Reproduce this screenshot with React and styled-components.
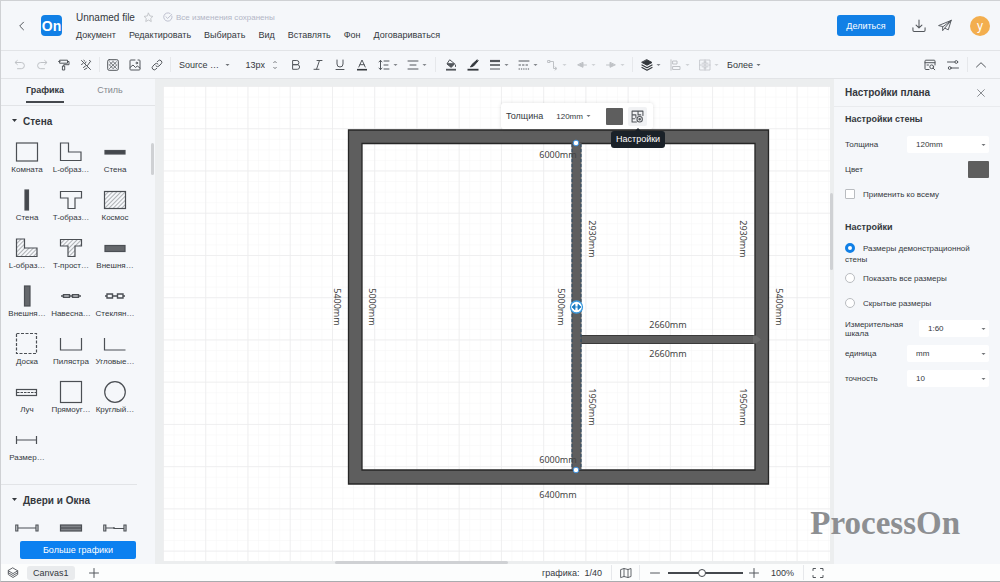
import React, { useState } from 'react';
import styled, { createGlobalStyle } from 'styled-components';

const GlobalStyle = createGlobalStyle`
  * {
    box-sizing: border-box;
  }

  body {
    margin: 0;
    font-family: 'Liberation Sans', Arial, sans-serif;
    font-size: 9px;
    color: #34383d;
    background: #f5f7fa;
  }

  button, input, select {
    font-family: inherit;
    color: inherit;
    margin: 0;
  }

  button {
    cursor: pointer;
  }
`;

const Page = styled.div`
  position: relative;
  height: 100vh;
  display: flex;
  flex-direction: column;
  overflow: hidden;
  border: 1px solid #cfd1d4;
  border-right: none;
  border-bottom-color: #a9abae;
`;

// Header
const Header = styled.header`
  display: flex;
  align-items: center;
  height: 50px;
  flex-shrink: 0;
  padding: 0 10px 0 12px;
  border-bottom: 1px solid #e2e4e7;
`;

const IconButton = styled.button`
  display: flex;
  align-items: center;
  justify-content: center;
  gap: 3px;
  width: ${props => props.$width || 22}px;
  height: ${props => props.$height || 22}px;
  flex-shrink: 0;
  padding: 0;
  border: none;
  background: none;
  color: ${props => (props.$muted ? '#bfc2c6' : '#53575c')};
`;

const Logo = styled.a`
  display: flex;
  align-items: center;
  justify-content: center;
  width: 21px;
  height: 21px;
  margin: 0 14px 0 11px;
  border-radius: 4px;
  background: #1180e6;
  color: white;
  font-size: 14px;
  font-weight: bold;
  text-decoration: none;
`;

const HeaderMain = styled.div`
  flex: 1;
  display: flex;
  flex-direction: column;
  gap: 5px;
`;

const FileRow = styled.div`
  display: flex;
  align-items: center;
  height: 14px;
`;

const FileName = styled.h1`
  margin: 0 8px 0 0;
  font-size: 10px;
  font-weight: normal;
`;

const Saved = styled.span`
  display: flex;
  align-items: center;
  gap: 3px;
  margin-left: 8px;
  color: #b3b6c6;
  font-size: 8px;
`;

const Menu = styled.nav`
  display: flex;
  gap: 13px;
`;

const MenuLink = styled.a`
  color: #34383d;
  font-size: 9px;
  line-height: 12px;
  text-decoration: none;
`;

const ShareButton = styled.button`
  width: 58px;
  height: 21px;
  margin-right: 11px;
  padding: 0;
  border: none;
  border-radius: 3px;
  background: #1180e6;
  color: white;
  font-size: 9px;
`;

const Avatar = styled.button`
  width: 20px;
  height: 20px;
  margin-left: 12px;
  padding: 0;
  border: none;
  border-radius: 50%;
  background: #f3ae4e;
  color: white;
  font-size: 12px;
  line-height: 18px;
`;

// Toolbar
const Toolbar = styled.div`
  display: flex;
  align-items: center;
  height: 28px;
  flex-shrink: 0;
  padding: 0 8px;
  border-bottom: 1px solid #e2e4e7;
`;

const Separator = styled.span`
  width: 1px;
  height: 15px;
  flex-shrink: 0;
  margin: 0 ${props => props.$gap || 2}px;
  background: #e6e8eb;
`;

const SelectBox = styled.span`
  position: relative;
  display: flex;
  align-items: center;
  width: ${props => props.$width}px;
  height: 17px;
  flex-shrink: 0;
  border-radius: 2px;
  background: ${props => (props.$filled ? 'white' : 'none')};
  font-size: ${props => (props.$small ? 8 : 9)}px;

  svg {
    position: absolute;
    right: ${props => props.$caret || 3}px;
    pointer-events: none;
  }
`;

const Select = styled.select`
  appearance: none;
  width: 100%;
  height: 100%;
  padding: 0 0 0 ${props => props.$pad || 8}px;
  border: none;
  background: none;
  font-size: inherit;
`;

const SizeInput = styled.input`
  width: 30px;
  padding: 0;
  border: none;
  background: none;
  font-size: 9px;
  text-align: right;
`;

const MoreButton = styled.button`
  display: flex;
  align-items: center;
  gap: 3px;
  padding: 0 4px;
  border: none;
  background: none;
  font-size: 9px;
`;

const Spacer = styled.span`
  flex: 1;
`;

// Body
const Workspace = styled.div`
  flex: 1;
  min-height: 0;
  display: flex;
`;

const Library = styled.aside`
  display: flex;
  flex-direction: column;
  width: 154px;
  flex-shrink: 0;
`;

const Tabs = styled.div`
  display: flex;
  height: 27px;
  flex-shrink: 0;
  padding-left: 12px;
  gap: 1px;
  border-bottom: 1px solid #e2e4e7;
`;

const Tab = styled.button`
  width: 64px;
  height: 26px;
  padding: 0 0 2px;
  border: none;
  background: none;
  color: ${props => (props.$active ? '#34383d' : '#85898e')};
  font-size: 9px;
  font-weight: ${props => (props.$active ? 'bold' : 'normal')};

  span {
    display: inline-block;
    height: 24px;
    line-height: 22px;
    border-bottom: 2px solid ${props => (props.$active ? '#44484d' : 'transparent')};
  }
`;

const LibraryBody = styled.div`
  flex: 1;
  min-height: 0;
  display: flex;
  justify-content: space-between;
  overflow: hidden;
`;

const ShapeGroup = styled.section`
  padding: 8px 0 0 4px;

  & + & {
    margin-top: 17px;
    border-top: 1px solid #e2e4e7;
  }
`;

const GroupTitle = styled.h2`
  display: flex;
  align-items: center;
  gap: 5px;
  height: 14px;
  margin: 0;
  padding-left: 6px;
  font-size: 10px;
  font-weight: bold;
`;

const ShapeGrid = styled.div`
  display: grid;
  grid-template-columns: repeat(3, 44px);
  row-gap: 4px;
  padding-top: 7px;
`;

const Shape = styled.button`
  display: flex;
  flex-direction: column;
  align-items: center;
  justify-content: center;
  height: ${props => (props.$short ? 28 : 44)}px;
  padding: 0;
  gap: 1px;
  border: none;
  background: none;
  font-size: 8px;
  line-height: 10px;
  white-space: nowrap;
`;

const Thumb = styled.span`
  width: 3px;
  height: ${props => props.$size || 3}px;
  flex-shrink: 0;
  border-radius: 2px;
  background: #cfd1d4;
`;

const LibraryThumb = styled(Thumb)`
  margin: 37px 1px 0 0;
`;

const MoreShapes = styled.button`
  height: 18px;
  flex-shrink: 0;
  margin: 0 19px 5px;
  padding: 0;
  border: none;
  border-radius: 2px;
  background: #0b80f0;
  color: white;
  font-size: 9px;
`;

const Stage = styled.main`
  flex: 1;
  min-width: 0;
  display: grid;
  grid-template-columns: 1fr 4px;
  grid-template-rows: 1fr 3px;
  padding: 7px 0 0 8px;
  background: #eceeef;
`;

const Sheet = styled.div`
  position: relative;
  overflow: hidden;
  background: white;
`;

const Plan = styled.svg`
  display: block;
  width: 100%;
  height: 100%;

  text {
    font-family: 'Noto Sans', sans-serif;
    font-size: 9px;
    fill: #444;
    text-anchor: middle;
    dominant-baseline: central;
  }
`;

const VerticalTrack = styled.div`
  padding-top: 107px;
  display: flex;
`;

const HorizontalTrack = styled.div`
  padding-left: 172px;
  display: flex;
`;

const HorizontalThumb = styled(Thumb)`
  width: 173px;
`;

const FloatingBar = styled.div`
  position: absolute;
  left: 338px;
  top: 17px;
  display: flex;
  align-items: center;
  height: 26px;
  padding: 0 6px 0 5px;
  border-radius: 3px;
  background: white;
  box-shadow: 0 0 4px rgba(0, 0, 0, 0.12);
  font-size: 9px;
`;

const Swatch = styled.button`
  width: ${props => props.$width || 17}px;
  height: 17px;
  padding: 0;
  border: none;
  border-radius: 1px;
  background: #5e5e5e;
`;

const PlanButton = styled(IconButton)`
  margin-left: 5px;
  border-radius: 2px;
  background: #f1f2f4;
`;

const Tooltip = styled.div`
  position: absolute;
  left: 448px;
  top: 45px;
  padding: 0 5px;
  border-radius: 3px;
  background: #1a2128;
  color: white;
  font-size: 9px;
  line-height: 17px;

  &::before {
    content: '';
    position: absolute;
    left: 50%;
    top: -3px;
    margin-left: -3px;
    border: solid transparent;
    border-width: 0 3px 3px;
    border-bottom-color: #1a2128;
  }
`;

// Settings panel
const Settings = styled.aside`
  width: 166px;
  flex-shrink: 0;
`;

const SettingsHeader = styled.div`
  display: flex;
  align-items: center;
  justify-content: space-between;
  height: 28px;
  padding: 0 8px 0 11px;
  border-bottom: 1px solid #e9ebee;
`;

const SettingsTitle = styled.h2`
  margin: 0;
  font-size: 10px;
`;

const SettingsSection = styled.section`
  padding: 0 11px;
`;

const SettingsHeading = styled.h3`
  margin: 0;
  font-size: 9px;
  line-height: ${props => (props.$spaced ? 17 : 25)}px;
  padding-top: ${props => (props.$spaced ? 12 : 0)}px;
`;

const Row = styled.div`
  display: flex;
  align-items: center;
  justify-content: space-between;
  height: 25px;
  font-size: 8px;
  line-height: 9px;
`;

const Option = styled.label`
  display: block;
  font-size: 8px;
  line-height: 11px;
  padding: 7px 0 ${props => (props.$wraps ? 1 : 7)}px;
`;

const optionBox = `
  appearance: none;
  width: 10px;
  height: 10px;
  margin-right: 8px;
  vertical-align: -2px;
  background: white;
  border: 1px solid #b9bcc0;
`;

const Checkbox = styled.input`
  ${optionBox}
  border-radius: 1px;

  &:checked {
    background: #1180e6;
  }
`;

const Radio = styled.input`
  ${optionBox}
  border-radius: 50%;

  &:checked {
    border: 3px solid #1180e6;
  }
`;

const Watermark = styled.div`
  position: absolute;
  right: 40px;
  bottom: 38px;
  color: #8d8f92;
  font-family: 'Liberation Serif', serif;
  font-size: 33px;
  font-weight: bold;
  line-height: 40px;
  pointer-events: none;
`;

// Status bar
const StatusBar = styled.footer`
  display: flex;
  align-items: center;
  height: 17px;
  flex-shrink: 0;
  padding: 0 171px 0 1px;
  background: #fcfdfd;
`;

const CanvasTab = styled.button`
  height: 14px;
  margin: 0 8px 0 3px;
  padding: 0 6px;
  border: none;
  border-radius: 3px;
  background: #e9ebed;
  font-size: 9px;
`;

const StatusText = styled.span`
  padding: 0 6px;
  font-size: 9px;
`;

const Zoom = styled.input`
  appearance: none;
  width: 75px;
  height: 10px;
  background: none;

  &::-webkit-slider-runnable-track {
    height: 2px;
    background: #44484d;
  }

  &::-webkit-slider-thumb {
    appearance: none;
    width: 8px;
    height: 8px;
    margin-top: -3px;
    border: 1px solid #44484d;
    border-radius: 50%;
    background: white;
  }
`;

const Icon = ({ size = 12, children }) => (
  <svg
    width={size}
    height={size}
    viewBox="0 0 12 12"
    fill="none"
    stroke="currentColor"
    strokeWidth="1"
    strokeLinecap="round"
    strokeLinejoin="round"
    aria-hidden="true"
  >
    {children}
  </svg>
);

const Caret = () => (
  <svg width="5" height="4" viewBox="0 0 5 4" aria-hidden="true">
    <path d="M.5 1h4L2.5 3z" fill="currentColor" opacity=".7" />
  </svg>
);

const GroupArrow = () => (
  <svg width="7" height="7" viewBox="0 0 7 7" aria-hidden="true">
    <path d="M1 1h5L3.500 4z" fill="#34383d" />
  </svg>
);

const icons = {
  undo: <path d="M3.3 1.5 1 3.5l2.3 2M1.3 3.5h6a3 3 0 0 1 0 6.2H3.5" />,
  redo: <path d="m8.7 1.5 2.3 2-2.3 2M10.7 3.5h-6a3 3 0 0 0 0 6.2h3.8" />,
  painter: <path d="M2 1.2h7.5v3H2zM9.5 2.5H11v3.2H5.7V7M4.8 7h1.9v4H4.8zM.6 2.5H2" />,
  clear: <path d="m1.5 1.5 9 9M7.500 6.500 10 3M5 4.500l1-1.500M1.500 5.500l1.500-1M3.500 8.500l2-1.500M4.500 10.500 7 9M9.500 1.500l1.300 1M3.800 1.300l1 .8" />,
  pattern: (
    <>
      <rect x=".7" y=".7" width="10.6" height="10.6" rx="1.5" />
      <path d="m2.500 2.800 7 6.700M6 2.500l3.500 3.300M2.500 6 6 9.500M9.500 2.800l-7 6.700M6 2.500 2.500 5.800M9.500 6.200 6.200 9.500" strokeWidth=".8" />
    </>
  ),
  image: (
    <>
      <path d="M6 1H1.8a.8.8 0 0 0-.8.8v8.4c0 .5.3.8.8.8h8.4c.5 0 .8-.3.8-.8V1.800a.8.8 0 0 0-.8-.8H9M1 8.500 4 6l2.500 2.500L8.300 7 11 9" />
      <circle cx="7.800" cy="4" r=".8" />
    </>
  ),
  link: <path d="M5 7a2.1 2.1 0 0 0 3 0l2.200-2.200a2.100 2.100 0 0 0-3-3L6.300 2.700M7 5a2.100 2.100 0 0 0-3 0L1.800 7.200a2.100 2.100 0 0 0 3 3l.9-.9" />,
  bold: <path d="M3 1.500h3.800a2.100 2.100 0 0 1 0 4.200H3zM3 5.700h4.300a2.300 2.300 0 0 1 0 4.600H3z" />,
  italic: <path d="M5 1.500h5M2 10.300h5M7.500 1.500l-3 8.800" />,
  underline: <path d="M3 1v4a3 3 0 0 0 6 0V1M2 10.500h8" />,
  color: (
    <>
      <path d="M2.800 8 6 1l3.200 7M3.900 5.700h4.200" />
      <path d="M1 10.700h10" stroke="#34383d" strokeWidth="1.600" strokeLinecap="butt" />
    </>
  ),
  leading: <path d="M2.500 1.500v9M1 2.800l1.500-1.300L4 2.800M1 9.200l1.500 1.300L4 9.200M6 2h5M6 6h4M6 10h5" />,
  align: <path d="M1 2h10M3 6h6M1 10h10" />,
  fill: (
    <>
      <path d="m5 1 4.500 3.700-3.200 3.500-4-3.200zM2.500 4.800h6.500" />
      <path d="M2.500 5h6.800L6.300 8z" fill="currentColor" />
      <path d="M10.500 6v1.500" />
      <path d="M1 10.700h10" strokeWidth="1.800" strokeLinecap="butt" />
    </>
  ),
  pen: (
    <>
      <path d="M10 1 5 5.500 3.500 8 6.500 7 11 2z" fill="#34383d" stroke="#34383d" />
      <path d="M.5 10.700h11" stroke="#34383d" strokeWidth="1.800" strokeLinecap="butt" />
    </>
  ),
  weight: (
    <>
      <path d="M1 2h10" strokeWidth="2.200" strokeLinecap="butt" />
      <path d="M1 6h10" strokeWidth="1.600" strokeLinecap="butt" />
      <path d="M1 10h10" strokeLinecap="butt" />
    </>
  ),
  dash: (
    <>
      <path d="M1 2h10" />
      <path d="M1 6h10" strokeDasharray="1.500 2" />
      <path d="M1 10h10" strokeDasharray=".5 1.800" />
    </>
  ),
  connector: <path d="M1 1.500h2v2H1zM3 2.500h3.500v7H9M8 8l2 1.500L8 11" />,
  left: <path d="M10.500 6H7M7 3.700v4.600L2 6z" fill="currentColor" />,
  right: <path d="M1.500 6H5M5 3.700v4.600L10 6z" fill="currentColor" />,
  layers: (
    <>
      <path d="m6 .8 5 2.700-5 2.700-5-2.700z" fill="#34383d" stroke="#34383d" />
      <path d="m1 6 5 2.700L11 6M1 8.500l5 2.700 5-2.700" stroke="#34383d" strokeWidth="1.200" />
    </>
  ),
  stack: <path d="m6 1 4.700 2.800L6 6.600 1.300 3.800zM1.300 3.800v3.700L6 10.500l4.700-3V3.800M1.300 5.700 6 8.500l4.700-2.800" strokeWidth=".9" />,
  distribute: <path d="M1 .8v10.400M3 2h4v3H3zM3 7.500h7v3H3z" />,
  group: <path d="M1 1h10v10H1zM3 4.200h2.200V2.500M9 4.200H6.800V2.500M3 7.800h2.200v1.700M9 7.800H6.800v1.700M6 1v10M1 6h10" strokeWidth=".8" />,
  find: (
    <>
      <path d="M5 10.500H1.800a.8.8 0 0 1-.8-.8V2c0-.5.300-.8.800-.8h8.400c.5 0 .8.300.8.800v4M1 3.700h10M3 6h1.500" />
      <circle cx="7.700" cy="7.800" r="1.900" />
      <path d="m9.200 9.200 1.600 1.600" />
    </>
  ),
  sliders: (
    <>
      <path d="M.5 3h7.300M4.200 9h7.300" />
      <circle cx="9.300" cy="3" r="1.400" />
      <circle cx="2.700" cy="9" r="1.400" />
    </>
  ),
  up: <path d="m1.500 8 4.500-4.300L10.500 8" />,
  back: <path d="M7.500 2.200 3.700 6l3.800 3.800" />,
  star: <path d="m6 1.300 1.500 3 3.300.5-2.400 2.300.6 3.300-3-1.600-3 1.600.6-3.300L1.200 4.800l3.300-.5z" />,
  saved: <path d="M10.800 5A5 5 0 1 1 8.500 1.700M3.500 5.700l2 2 5-4.700" />,
  download: <path d="M6 .8v6.700M3.500 5.200 6 7.700l2.500-2.500M.8 7.500v2.200c0 .6.400 1 1 1h8.400c.6 0 1-.4 1-1V7.500" strokeWidth=".9" />,
  send: <path d="M.8 5.500 11.300 1.200 8.800 9.300 5.800 7.800 4 10V6.800zM11.300 1.200 4 6.800M5.800 7.800l5.500-6.600" strokeWidth=".8" />,
  close: <path d="m2 2 8 8M10 2l-8 8" strokeWidth=".8" />,
  plus: <path d="M6 1.500v9M1.500 6h9" />,
  minus: <path d="M1.500 6h9" />,
  map: <path d="m1 2.500 3-1 4 1 3-1v8l-3 1-4-1-3 1zM4 1.500v8M8 2.500v8" strokeWidth=".9" />,
  full: <path d="M1 3.500V1.500h2.500M8.500 1.500H11v2M11 8.500v2H8.500M3.500 10.500H1v-2" />,
  plan: (
    <>
      <path d="M1 1h10v4M1 1v10h4M1 4.500h3.500M6.500 1v3.500H9M1 8h2.500M4.500 4.500V7" />
      <circle cx="8" cy="8.500" r="2.500" />
      <circle cx="8" cy="8.500" r=".7" fill="currentColor" />
    </>
  ),
  sizes: <path d="M4.700 3.700 6 2.400l1.300 1.300M4.700 8.300 6 9.600l1.300-1.300" strokeWidth=".8" />,
};

const ToolButton = ({ name, label, menu, muted, size, width }) => (
  <IconButton aria-label={label} $width={width || (menu ? 29 : 22)} $height={size > 12 ? 22 : 14} $muted={muted}>
    <Icon size={size}>{icons[name]}</Icon>
    {menu && <Caret />}
  </IconButton>
);

const hatch = 'url(#hatch)';

// each shape is drawn in a 24 x 24 box
const wallShapes = [
  { label: 'Комната', art: <rect x="1.500" y="3" width="21" height="18" /> },
  { label: 'L-образ…', art: <path d="M1.500 3h8v9h12.500v8.500H1.500z" /> },
  { label: 'Стена', art: <rect x="2" y="10.500" width="20" height="3.500" fill="#44484d" /> },
  { label: 'Стена', art: <rect x="10" y="2" width="3.500" height="20" fill="#44484d" /> },
  { label: 'T-образ…', art: <path d="M1.500 3.500h21V10H16v10.500H9V10H1.500z" /> },
  { label: 'Космос', art: <rect x="1.500" y="3.500" width="21" height="17" fill={hatch} /> },
  { label: 'L-образ…', art: <path d="M1.500 3h8v9h12.500v8.500H1.500z" fill={hatch} /> },
  { label: 'T-прост…', art: <path d="M1.500 3.500h21V10H16v10.500H9V10H1.500z" fill={hatch} /> },
  { label: 'Внешня…', art: <rect x="2" y="9.500" width="20" height="6" fill="#65686c" /> },
  { label: 'Внешня…', art: <rect x="9.500" y="2" width="5.500" height="20" fill="#65686c" /> },
  { label: 'Навесна…', art: <path d="M2 12h2M10.500 12h3M20 12h2M4.500 10.700h6v2.600h-6zM13.500 10.700h6v2.600h-6z" strokeWidth="1.400" /> },
  { label: 'Стеклян…', art: <path d="M2 12h2M9.500 12h5M20 12h2M4 10h5.500v4H4zM14.500 10H20v4h-5.500z" strokeWidth="1.400" /> },
  { label: 'Доска', art: <rect x="1.500" y="1.500" width="20" height="20" strokeDasharray="3 1.500" /> },
  { label: 'Пилястра', art: <path d="M1.500 6v12h21V6" /> },
  { label: 'Угловые…', art: <path d="M1.500 6v12h21" /> },
  { label: 'Луч', art: <><rect x="1.500" y="9.500" width="20" height="6" /><path d="M2 12.500h19" strokeDasharray="2.500 1" /></> },
  { label: 'Прямоуг…', art: <rect x="1.500" y="1.500" width="21" height="21" /> },
  { label: 'Круглый…', art: <circle cx="12" cy="12" r="10.300" /> },
  { label: 'Размер…', art: <path d="M1.500 8v8M21.500 8v8M1.500 12h20" /> },
];

const doorShapes = [
  { name: 'Дверь', art: <path d="M.8 9h2v6h-2zM21 9h2v6h-2zM3 12h18" /> },
  { name: 'Окно', art: <><rect x="1.500" y="9" width="21" height="6" fill="#808388" /><path d="M2 12h20" /></> },
  { name: 'Двойная дверь', art: <path d="M.8 9h2v6h-2zM21 9h2v6h-2zM3 12h8M11 12.500h10M11 11v2" /> },
];

const ShapeArt = ({ children }) => (
  <svg width="24" height="24" viewBox="0 0 24 24" fill="none" stroke="#4b4f54" strokeWidth="1.200" aria-hidden="true">
    {children}
  </svg>
);

const dimensions = [
  { x: 395, y: 68, text: '6000mm' },
  { x: 395, y: 373, text: '6000mm' },
  { x: 395, y: 408, text: '6400mm' },
  { x: 505, y: 238, text: '2660mm' },
  { x: 505, y: 267, text: '2660mm' },
  { x: 174, y: 221, text: '5400mm', vertical: true },
  { x: 209, y: 221, text: '5000mm', vertical: true },
  { x: 398, y: 221, text: '5000mm', vertical: true },
  { x: 429, y: 153, text: '2930mm', vertical: true },
  { x: 580, y: 153, text: '2930mm', vertical: true },
  { x: 616, y: 221, text: '5400mm', vertical: true },
  { x: 429, y: 321, text: '1950mm', vertical: true },
  { x: 580, y: 321, text: '1950mm', vertical: true },
];

const FloorPlan = () => (
  <Plan>
    <defs>
      <pattern id="fine" width="10.560" height="10.560" patternUnits="userSpaceOnUse">
        <path d="M10.560 0H0v10.560" fill="none" stroke="#f5f5f6" strokeWidth="1" />
      </pattern>
      <pattern id="coarse" width="42.240" height="42.240" patternUnits="userSpaceOnUse">
        <path d="M42.240 0H0v42.240" fill="none" stroke="#ececed" strokeWidth="1.500" />
      </pattern>
    </defs>
    <rect width="100%" height="100%" fill="url(#fine)" />
    <rect width="100%" height="100%" fill="url(#coarse)" />
    <path
      d="M185.500 44h420v354h-420zM199 57.500v326.500h393V57.500z"
      fill="#5e5e5e"
      fillRule="evenodd"
      stroke="#262626"
      strokeWidth="1.300"
    />
    <rect x="418" y="249.500" width="174" height="8" fill="#5e5e5e" stroke="#3a3a3a" />
    <path d="M590 249.500h3l5 4-5 4h-3z" fill="#6b6b6b" />
    <rect x="408.500" y="57" width="10" height="327" fill="#5e5e5e" />
    <path d="M409 58v326M418 58v326" stroke="#2b4a66" strokeDasharray="3 2" />
    {dimensions.map(({ x, y, text, vertical }) => (
      <text key={`${x}-${y}`} x={x} y={y} transform={vertical ? `rotate(90 ${x} ${y})` : undefined}>
        {text}
      </text>
    ))}
    <circle cx="413" cy="57" r="2.800" fill="white" stroke="#3b8fdc" />
    <circle cx="413" cy="384" r="2.800" fill="white" stroke="#3b8fdc" />
    <circle cx="413.500" cy="221" r="6" fill="white" stroke="#3b9be0" strokeWidth="1.300" />
    <path d="M409 221l3-2.700v5.400zM418 221l-3-2.700v5.400zM411 221h5" fill="#1a7cc4" stroke="#1a7cc4" strokeWidth=".8" />
  </Plan>
);

const SettingSelect = ({ id, label, width, value }) => (
  <Row>
    <label htmlFor={id}>{label}</label>
    <SelectBox $width={width} $filled $small>
      <Select id={id} $pad={9} defaultValue={value}>
        <option>{value}</option>
      </Select>
      <Caret />
    </SelectBox>
  </Row>
);

const App = () => {
  const [sizeMode, setSizeMode] = useState('demo');
  const [applyAll, setApplyAll] = useState(false);
  const [zoom, setZoom] = useState(45);

  const menu = ['Документ', 'Редактировать', 'Выбирать', 'Вид', 'Вставлять', 'Фон', 'Договариваться'];
  const sizeModes = [
    { id: 'demo', text: 'Размеры демонстрационной стены', wraps: true },
    { id: 'all', text: 'Показать все размеры' },
    { id: 'hidden', text: 'Скрытые размеры' },
  ];

  return (
    <Page>
      <GlobalStyle />
      <Header>
        <ToolButton name="back" label="Назад" width={17} />
        <Logo href="#home">On</Logo>
        <HeaderMain>
          <FileRow>
            <FileName>Unnamed file</FileName>
            <ToolButton name="star" label="В избранное" size={11} width={12} muted />
            <Saved>
              <Icon size={10}>{icons.saved}</Icon>
              Все изменения сохранены
            </Saved>
          </FileRow>
          <Menu>
            {menu.map(item => (
              <MenuLink key={item} href="#menu">{item}</MenuLink>
            ))}
          </Menu>
        </HeaderMain>
        <ShareButton>Делиться</ShareButton>
        <ToolButton name="download" label="Скачать" size={14} width={26} />
        <ToolButton name="send" label="Отправить" size={14} width={26} />
        <Avatar>y</Avatar>
      </Header>

      <Toolbar>
        <ToolButton name="undo" label="Отменить" muted />
        <ToolButton name="redo" label="Повторить" muted />
        <ToolButton name="painter" label="Формат по образцу" />
        <ToolButton name="clear" label="Очистить" />
        <Separator />
        <ToolButton name="pattern" label="Узор" />
        <ToolButton name="image" label="Картинка" />
        <ToolButton name="link" label="Ссылка" />
        <Separator />
        <SelectBox $width={62} $caret={5}>
          <Select $pad={6} aria-label="Шрифт">
            <option>Source …</option>
          </Select>
          <Caret />
        </SelectBox>
        <SizeInput aria-label="Размер шрифта" defaultValue="13px" />
        <ToolButton name="sizes" label="Изменить размер" width={20} />
        <ToolButton name="bold" label="Полужирный" />
        <ToolButton name="italic" label="Курсив" />
        <ToolButton name="underline" label="Подчёркнутый" />
        <ToolButton name="color" label="Цвет текста" />
        <ToolButton name="leading" label="Интервал" menu />
        <ToolButton name="align" label="Выравнивание" menu />
        <Separator $gap={4} />
        <ToolButton name="fill" label="Заливка" />
        <ToolButton name="pen" label="Цвет линии" />
        <ToolButton name="weight" label="Толщина линии" menu />
        <ToolButton name="dash" label="Тип линии" menu />
        <ToolButton name="connector" label="Соединитель" menu muted />
        <ToolButton name="left" label="Начало линии" menu muted />
        <ToolButton name="right" label="Конец линии" menu muted />
        <Separator $gap={3} />
        <ToolButton name="layers" label="Слои" menu />
        <ToolButton name="distribute" label="Распределить" menu muted />
        <ToolButton name="group" label="Группировать" menu muted />
        <MoreButton>Более<Caret /></MoreButton>
        <Spacer />
        <ToolButton name="find" label="Найти" />
        <ToolButton name="sliders" label="Параметры" width={24} />
        <Separator />
        <ToolButton name="up" label="Свернуть" />
      </Toolbar>

      <Workspace>
        <Library>
          <Tabs>
            <Tab $active><span>Графика</span></Tab>
            <Tab><span>Стиль</span></Tab>
          </Tabs>
          <LibraryBody>
            <div>
              <svg width="0" height="0" display="block" aria-hidden="true">
                <pattern id="hatch" width="3" height="3" patternUnits="userSpaceOnUse" patternTransform="rotate(45)">
                  <path d="M0 0v3" stroke="#6a6d71" strokeWidth="1" />
                </pattern>
              </svg>
              <ShapeGroup>
                <GroupTitle><GroupArrow />Стена</GroupTitle>
                <ShapeGrid>
                  {wallShapes.map(({ label, art }, index) => (
                    <Shape key={index}>
                      <ShapeArt>{art}</ShapeArt>
                      {label}
                    </Shape>
                  ))}
                </ShapeGrid>
              </ShapeGroup>
              <ShapeGroup>
                <GroupTitle><GroupArrow />Двери и Окна</GroupTitle>
                <ShapeGrid>
                  {doorShapes.map(({ name, art }) => (
                    <Shape key={name} $short aria-label={name}>
                      <ShapeArt>{art}</ShapeArt>
                    </Shape>
                  ))}
                </ShapeGrid>
              </ShapeGroup>
            </div>
            <LibraryThumb $size={32} />
          </LibraryBody>
          <MoreShapes>Больше графики</MoreShapes>
        </Library>

        <Stage>
          <Sheet>
            <FloorPlan />
            <FloatingBar>
              <label htmlFor="wall">Толщина</label>
              <SelectBox $width={63} $caret={15} $small>
                <Select id="wall" $pad={13}>
                  <option>120mm</option>
                </Select>
                <Caret />
              </SelectBox>
              <Swatch aria-label="Цвет стены" />
              <PlanButton $width={19} $height={19} aria-label="Настройки плана">
                <Icon size={13}>{icons.plan}</Icon>
              </PlanButton>
            </FloatingBar>
            <Tooltip role="tooltip">Настройки</Tooltip>
          </Sheet>
          <VerticalTrack>
            <Thumb $size={77} />
          </VerticalTrack>
          <HorizontalTrack>
            <HorizontalThumb />
          </HorizontalTrack>
        </Stage>

        <Settings>
          <SettingsHeader>
            <SettingsTitle>Настройки плана</SettingsTitle>
            <ToolButton name="close" label="Закрыть" size={10} />
          </SettingsHeader>
          <SettingsSection>
            <SettingsHeading>Настройки стены</SettingsHeading>
            <SettingSelect id="thickness" label="Толщина" width={82} value="120mm" />
            <Row>
              <span>Цвет</span>
              <Swatch $width={21} aria-label="Цвет" />
            </Row>
            <Option>
              <Checkbox type="checkbox" checked={applyAll} onChange={() => setApplyAll(!applyAll)} />
              Применить ко всему
            </Option>
            <SettingsHeading $spaced>Настройки</SettingsHeading>
            {sizeModes.map(({ id, text, wraps }) => (
              <Option key={id} $wraps={wraps}>
                <Radio type="radio" name="sizes" checked={sizeMode === id} onChange={() => setSizeMode(id)} />
                {text}
              </Option>
            ))}
            <SettingSelect id="scale" label="Измерительная шкала" width={70} value="1:60" />
            <SettingSelect id="unit" label="единица" width={82} value="mm" />
            <SettingSelect id="precision" label="точность" width={82} value="10" />
          </SettingsSection>
        </Settings>
      </Workspace>

      <StatusBar>
        <ToolButton name="stack" label="Слои" />
        <CanvasTab>Canvas1</CanvasTab>
        <ToolButton name="plus" label="Добавить" />
        <Spacer />
        <StatusText>графика:&nbsp; 1/40</StatusText>
        <Separator $gap={3} />
        <ToolButton name="map" label="Карта" />
        <Separator />
        <ToolButton name="minus" label="Уменьшить" width={26} />
        <Zoom type="range" aria-label="Масштаб" value={zoom} onChange={e => setZoom(e.target.value)} />
        <ToolButton name="plus" label="Увеличить" />
        <StatusText>100%</StatusText>
        <Separator $gap={3} />
        <ToolButton name="full" label="Во весь экран" />
      </StatusBar>
      <Watermark>ProcessOn</Watermark>
    </Page>
  );
};

export default App;
